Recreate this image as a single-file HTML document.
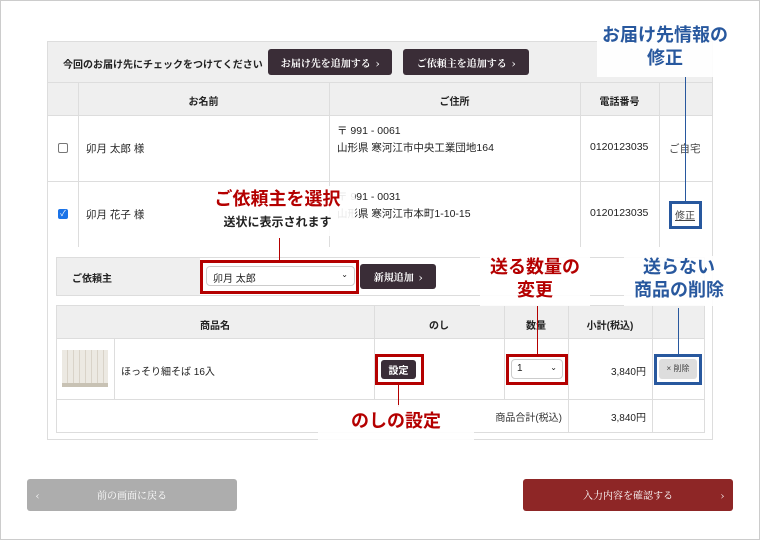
<!DOCTYPE html>
<html><head><meta charset="utf-8"><style>
*{margin:0;padding:0;box-sizing:border-box}
body{width:760px;height:540px;position:relative;background:#fff;font-family:"Liberation Sans","Noto Sans CJK JP",sans-serif;color:#222;overflow:hidden}
.a{position:absolute}
.frame{left:0;top:0;width:760px;height:540px;border:1px solid #ccc}
.box{left:47px;top:41px;width:666px;height:399px;border:1px solid #ddd;background:#fff}
.g{background:#efefef}
.vl{position:absolute;width:1px;background:#ddd}
.hl{position:absolute;height:1px;background:#ddd}
.btn{background:#3a2d37;color:#fff;border-radius:3px;font-size:10px;font-weight:bold;display:flex;align-items:center;justify-content:center;font-family:"Noto Serif CJK SC",serif}
.th{font-size:10px;font-weight:bold;text-align:center;color:#222}
.t{font-size:10.5px}
.red{color:#b40000;font-weight:bold}
.blue{color:#28589e;font-weight:bold}
.rb{border:3px solid #b40000}
.bb{border:3px solid #28589e}
.wb{background:rgba(255,255,255,.9)}
</style></head><body>
<div class="a frame"></div>
<div class="a box"></div>
<div class="a g" style="left:48px;top:42px;width:664px;height:40px"></div>
<div class="a t" style="left:63px;top:56px;font-size:10px;font-weight:bold">今回のお届け先にチェックをつけてください</div>
<div class="a btn" style="left:268px;top:49px;width:124px;height:26px">お届け先を追加する &nbsp;›</div>
<div class="a btn" style="left:403px;top:49px;width:126px;height:26px">ご依頼主を追加する &nbsp;›</div>
<div class="a g" style="left:48px;top:83px;width:664px;height:32px"></div>
<div class="hl" style="left:48px;top:82px;width:664px"></div>
<div class="hl" style="left:48px;top:115px;width:664px"></div>
<div class="hl" style="left:48px;top:181px;width:664px"></div>
<div class="vl" style="left:78px;top:82px;height:165px"></div>
<div class="vl" style="left:329px;top:82px;height:165px"></div>
<div class="vl" style="left:580px;top:82px;height:165px"></div>
<div class="vl" style="left:659px;top:82px;height:165px"></div>
<div class="a th" style="left:78px;top:93px;width:251px">お名前</div>
<div class="a th" style="left:329px;top:93px;width:251px">ご住所</div>
<div class="a th" style="left:580px;top:93px;width:79px">電話番号</div>
<div class="a" style="left:58px;top:143px;width:10px;height:10px;border:1px solid #777;border-radius:2px"></div>
<div class="a t" style="left:86px;top:141px">卯月 太郎 様</div>
<div class="a t" style="left:337px;top:123px;line-height:17px">〒 991 - 0061<br>山形県 寒河江市中央工業団地164</div>
<div class="a t" style="left:590px;top:141px">0120123035</div>
<div class="a t" style="left:669px;top:141px;color:#444">ご自宅</div>
<div class="a" style="left:58px;top:209px;width:10px;height:10px;background:#1a73e8;border-radius:2px;color:#fff;font-size:8px;line-height:10px;text-align:center">✓</div>
<div class="a t" style="left:86px;top:207px">卯月 花子 様</div>
<div class="a t" style="left:337px;top:189px;line-height:17px">〒 991 - 0031<br>山形県 寒河江市本町1-10-15</div>
<div class="a t" style="left:590px;top:207px">0120123035</div>
<div class="a t" style="left:675px;top:207px;text-decoration:underline;color:#444;font-size:10px">修正</div>
<div class="a bb" style="left:669px;top:201px;width:33px;height:28px"></div>

<div class="a" style="left:56px;top:257px;width:649px;height:39px;border:1px solid #ddd"></div>
<div class="a g" style="left:57px;top:258px;width:143px;height:37px"></div>
<div class="a" style="left:72px;top:270px;font-size:10px;font-weight:bold">ご依頼主</div>
<div class="a" style="left:206px;top:266px;width:149px;height:20px;border:1px solid #ccc;border-radius:4px;font-size:10px;padding:3px 6px">卯月 太郎<span style="float:right;font-size:8px">⌄</span></div>
<div class="a rb" style="left:200px;top:260px;width:159px;height:34px"></div>
<div class="a btn" style="left:360px;top:264px;width:76px;height:25px">新規追加 &nbsp;›</div>

<div class="a" style="left:56px;top:305px;width:649px;height:128px;border:1px solid #ddd"></div>
<div class="a g" style="left:57px;top:306px;width:647px;height:32px"></div>
<div class="hl" style="left:56px;top:338px;width:649px"></div>
<div class="hl" style="left:56px;top:399px;width:649px"></div>
<div class="vl" style="left:114px;top:338px;height:61px"></div>
<div class="vl" style="left:374px;top:305px;height:94px"></div>
<div class="vl" style="left:504px;top:305px;height:94px"></div>
<div class="vl" style="left:568px;top:305px;height:128px"></div>
<div class="vl" style="left:652px;top:305px;height:128px"></div>
<div class="a th" style="left:56px;top:317px;width:318px">商品名</div>
<div class="a th" style="left:374px;top:317px;width:130px">のし</div>
<div class="a th" style="left:504px;top:317px;width:64px">数量</div>
<div class="a th" style="left:568px;top:317px;width:84px">小計(税込)</div>
<div class="a" style="left:62px;top:350px;width:46px;height:37px;background:repeating-linear-gradient(90deg,#ece9e2 0 5px,#d9d3c8 5px 6px);border-bottom:4px solid #c8c2b4"></div>
<div class="a t" style="left:121px;top:363px;font-size:10px">ほっそり細そば 16入</div>
<div class="a btn" style="left:381px;top:360px;width:35px;height:19px;font-family:'Noto Sans CJK JP',sans-serif">設定</div>
<div class="a rb" style="left:375px;top:354px;width:49px;height:31px"></div>
<div class="a" style="left:511px;top:359px;width:52px;height:20px;border:1px solid #ccc;border-radius:4px;font-size:10px;padding:3px 5px">1<span style="float:right;font-size:8px">⌄</span></div>
<div class="a rb" style="left:506px;top:354px;width:62px;height:31px"></div>
<div class="a t" style="left:580px;top:363px;width:66px;text-align:right;font-size:10px">3,840円</div>
<div class="a" style="left:659px;top:359px;width:38px;height:20px;background:#ddd;border-radius:3px;font-size:8px;text-align:center;line-height:20px;color:#444">× 削除</div>
<div class="a bb" style="left:654px;top:354px;width:48px;height:31px"></div>
<div class="a t" style="left:420px;top:409px;width:142px;text-align:right;font-size:10px;color:#333">商品合計(税込)</div>
<div class="a t" style="left:580px;top:409px;width:66px;text-align:right;font-size:10px">3,840円</div>

<div class="a wb" style="left:200px;top:186px;width:155px;height:50px"></div>
<div class="a red" style="left:200px;top:185px;width:155px;text-align:center;font-size:18px">ご依頼主を選択</div>
<div class="a" style="left:200px;top:213px;width:155px;text-align:center;font-size:12px;font-weight:bold">送状に表示されます</div>
<div class="vl" style="left:279px;top:238px;height:22px;background:#b40000"></div>

<div class="a wb" style="left:597px;top:25px;width:136px;height:52px"></div>
<div class="a blue" style="left:597px;top:24px;width:136px;text-align:center;font-size:18px;line-height:23px">お届け先情報の<br>修正</div>
<div class="vl" style="left:685px;top:77px;height:124px;background:#28589e"></div>

<div class="a wb" style="left:480px;top:256px;width:110px;height:50px"></div>
<div class="a red" style="left:480px;top:256px;width:110px;text-align:center;font-size:18px;line-height:23px">送る数量の<br>変更</div>
<div class="vl" style="left:537px;top:306px;height:48px;background:#b40000"></div>

<div class="a wb" style="left:624px;top:256px;width:110px;height:50px"></div>
<div class="a blue" style="left:624px;top:256px;width:110px;text-align:center;font-size:18px;line-height:23px">送らない<br>商品の削除</div>
<div class="vl" style="left:678px;top:308px;height:46px;background:#28589e"></div>

<div class="vl" style="left:398px;top:385px;height:22px;background:#b40000"></div>
<div class="a wb" style="left:318px;top:405px;width:156px;height:36px"></div>
<div class="a red" style="left:318px;top:407px;width:156px;text-align:center;font-size:18px">のしの設定</div>

<div class="a" style="left:27px;top:479px;width:210px;height:32px;background:#adadad;border-radius:3px;color:#fff;font-size:10px;line-height:32px;text-align:center;font-family:'Noto Serif CJK SC',serif"><span style="position:absolute;left:9px">‹</span>前の画面に戻る</div>
<div class="a" style="left:523px;top:479px;width:210px;height:32px;background:#8e2626;border-radius:3px;color:#fff;font-size:10px;line-height:32px;text-align:center;font-family:'Noto Serif CJK SC',serif">入力内容を確認する<span style="position:absolute;right:9px">›</span></div>
</body></html>
